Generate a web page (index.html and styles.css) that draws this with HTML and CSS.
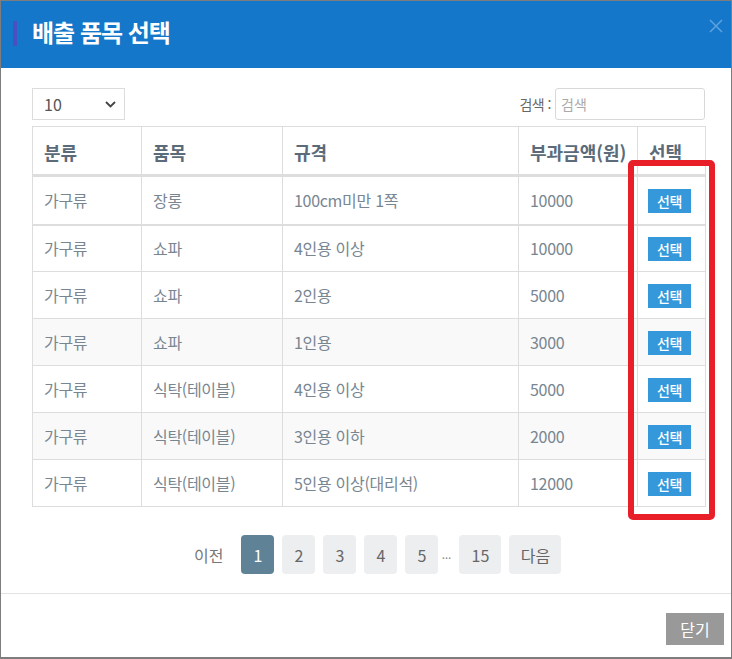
FILE: index.html
```html
<!DOCTYPE html>
<html lang="ko">
<head>
<meta charset="utf-8">
<title>배출 품목 선택</title>
<link rel="stylesheet" href="styles.css">
</head>
<body>
<div class="dialog">
  <div class="head">
    <span class="head-bar"></span>
    <h1 class="title">배출 품목 선택</h1>
    <span class="close" aria-label="close">
      <svg width="14" height="14" viewBox="0 0 14 14"><path d="M1 1L13 13M13 1L1 13" stroke="#5ea3e0" stroke-width="1.5" fill="none"/></svg>
    </span>
  </div>
  <div class="body">
    <div class="toolbar">
      <div class="select">
        <span>10</span>
        <svg width="11" height="7" viewBox="0 0 11 7"><path d="M1 1L5.5 5.5L10 1" stroke="#444" stroke-width="1.8" fill="none"/></svg>
      </div>
      <div class="search">
        <span class="search-label">검색 :</span>
        <div class="search-input">검색</div>
      </div>
    </div>
    <table class="grid">
      <colgroup>
        <col class="c1"><col class="c2"><col class="c3"><col class="c4"><col class="c5">
      </colgroup>
      <thead>
        <tr><th>분류</th><th>품목</th><th>규격</th><th>부과금액(원)</th><th>선택</th></tr>
      </thead>
      <tbody>
        <tr class="first"><td>가구류</td><td>장롱</td><td>100cm미만 1쪽</td><td>10000</td><td class="btn-cell"><span class="pick">선택</span></td></tr>
        <tr><td>가구류</td><td>쇼파</td><td>4인용 이상</td><td>10000</td><td class="btn-cell"><span class="pick">선택</span></td></tr>
        <tr><td>가구류</td><td>쇼파</td><td>2인용</td><td>5000</td><td class="btn-cell"><span class="pick">선택</span></td></tr>
        <tr class="alt"><td>가구류</td><td>쇼파</td><td>1인용</td><td>3000</td><td class="btn-cell"><span class="pick">선택</span></td></tr>
        <tr><td>가구류</td><td>식탁(테이블)</td><td>4인용 이상</td><td>5000</td><td class="btn-cell"><span class="pick">선택</span></td></tr>
        <tr class="alt"><td>가구류</td><td>식탁(테이블)</td><td>3인용 이하</td><td>2000</td><td class="btn-cell"><span class="pick">선택</span></td></tr>
        <tr><td>가구류</td><td>식탁(테이블)</td><td>5인용 이상(대리석)</td><td>12000</td><td class="btn-cell"><span class="pick">선택</span></td></tr>
      </tbody>
    </table>
    <div class="pager">
      <span class="prev">이전</span>
      <span class="pg active">1</span>
      <span class="pg">2</span>
      <span class="pg">3</span>
      <span class="pg">4</span>
      <span class="pg">5</span>
      <span class="dots">…</span>
      <span class="pg wide">15</span>
      <span class="pg next">다음</span>
    </div>
  </div>
  <div class="foot">
    <span class="close-btn">닫기</span>
  </div>
  <div class="highlight"></div>
</div>
</body>
</html>
```

FILE: styles.css
```css
* { box-sizing: border-box; }
html, body { margin: 0; padding: 0; background: #fff; }
body {
  font-family: "Noto Sans CJK KR", "Noto Sans", sans-serif;
  width: 732px;
  height: 659px;
  overflow: hidden;
}
.dialog {
  position: relative;
  width: 732px;
  height: 659px;
  border: 1px solid #7d7d7d;
  border-bottom-width: 2px;
  background: #fff;
  display: flex;
  flex-direction: column;
}
.head {
  height: 67px;
  background: #1577c9;
  display: flex;
  align-items: center;
  padding-left: 12px;
  position: relative;
}
.head-bar {
  width: 4px;
  height: 25px;
  background: #4a4fc4;
  margin-right: 15px;
  margin-top: -3px;
}
.title {
  margin: 0;
  color: #fff;
  font-size: 24px;
  font-weight: 700;
  letter-spacing: -1px;
  line-height: 1;
  margin-top: -5px;
}
.close {
  position: absolute;
  right: 8px;
  top: 18px;
  width: 14px;
  height: 14px;
  display: flex;
}
.body {
  padding: 20px 26px 0 31px;
}
.toolbar {
  display: flex;
  justify-content: space-between;
  align-items: center;
  height: 32px;
  margin-bottom: 6px;
}
.select {
  width: 93px;
  height: 32px;
  border: 1px solid #dcdcdc;
  display: flex;
  align-items: center;
  justify-content: space-between;
  padding: 0 8px 0 11px;
  font-size: 16px;
  color: #555;
}
.search {
  display: flex;
  align-items: center;
}
.search-label {
  font-size: 14px;
  color: #666;
  margin-right: 4px;
  letter-spacing: -0.5px;
}
.search-input {
  width: 150px;
  height: 32px;
  border: 1px solid #d8d8d8;
  border-radius: 3px;
  font-size: 14px;
  color: #aaa;
  display: flex;
  align-items: center;
  padding-left: 5px;
}
.grid {
  width: 673px;
  border-collapse: collapse;
  table-layout: fixed;
}
.c1 { width: 109px; }
.c2 { width: 141px; }
.c3 { width: 236px; }
.c4 { width: 119px; }
.c5 { width: 68px; }
.grid th, .grid td {
  border: 1px solid #dddddd;
  text-align: left;
  padding: 0 11px;
  white-space: nowrap;
}
.grid th {
  height: 49px;
  font-size: 18px;
  font-weight: 700;
  color: #5b6b79;
  border-bottom: 3px solid #dddddd;
  padding-top: 2px;
}
.grid td {
  height: 47px;
  font-size: 16px;
  color: #788692;
  letter-spacing: -0.3px;
}
.grid tr.first td { border-bottom: 2px solid #dddddd; height: 49px; }
.grid tr.alt td { background: #f9f9f9; }
.grid td.btn-cell { padding: 0 0 0 10px; }
.pick {
  display: inline-flex;
  align-items: center;
  justify-content: center;
  width: 43px;
  height: 24px;
  background: #3498db;
  color: #fff;
  font-size: 14px;
  font-weight: 500;
  line-height: 1;
}
.pager {
  margin-top: 28px;
  display: flex;
  align-items: center;
  justify-content: flex-start;
  padding-left: 162px;
  gap: 8px;
  height: 39px;
}
.prev {
  font-size: 16px;
  color: #777;
  margin-right: 10px;
}
.pg {
  width: 33px;
  height: 39px;
  border-radius: 4px;
  background: #eceef0;
  color: #666;
  font-size: 16px;
  display: flex;
  align-items: center;
  justify-content: center;
}
.pg.active { background: #5f8296; color: #fff; }
.pg.wide { width: 42px; }
.pg.next { width: 52px; }
.dots {
  font-family: "Noto Sans", sans-serif;
  font-size: 12px;
  color: #888;
  width: 12px;
  text-align: center;
  margin: 0 -1px 0 -6px;
  line-height: 1;
}
.foot {
  margin-top: 19px;
  border-top: 1px solid #e2e2e2;
  display: flex;
  justify-content: flex-end;
  padding: 19px 7px 0 0;
}
.close-btn {
  width: 58px;
  height: 32px;
  background: #999999;
  color: #fff;
  font-size: 16px;
  display: flex;
  align-items: center;
  justify-content: center;
}
.highlight {
  position: absolute;
  left: 627px;
  top: 159px;
  width: 87px;
  height: 360px;
  border: 6px solid #e81e29;
  border-radius: 5px;
  pointer-events: none;
}
```
